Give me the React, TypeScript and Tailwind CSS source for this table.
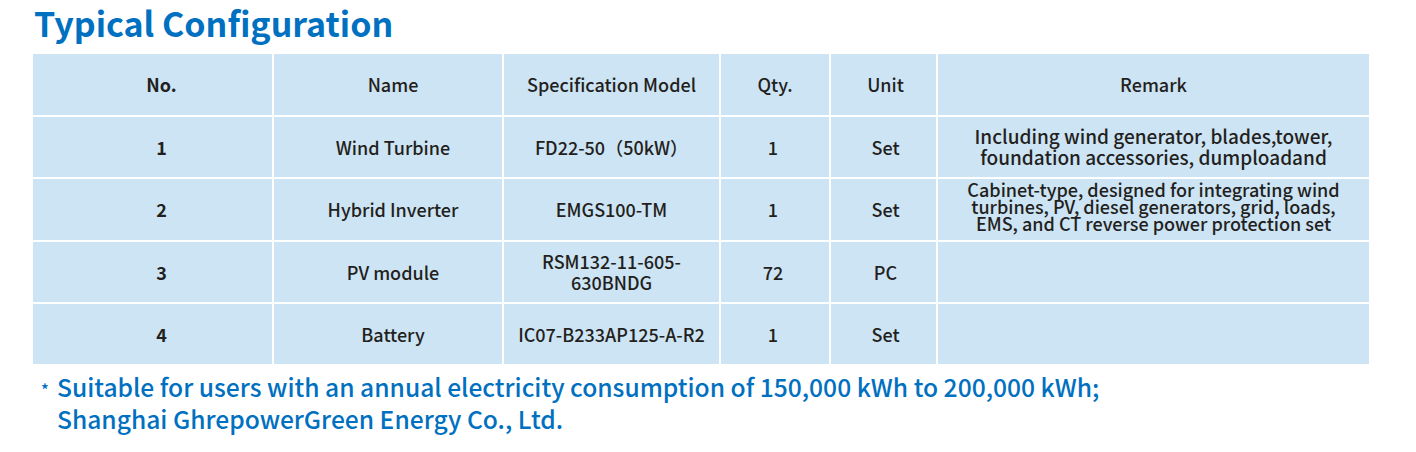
const COLS = ['No.', 'Name', 'Specification Model', 'Qty.', 'Unit', 'Remark']

const ROWS: { no: string; name: string; spec: string[]; qty: string; unit: string; remark: string[]; tight?: boolean }[] = [
  {
    no: '1',
    name: 'Wind Turbine',
    spec: ['FD22-50（50kW）'],
    qty: '1',
    unit: 'Set',
    remark: ['Including wind generator, blades,tower,', 'foundation accessories, dumploadand'],
  },
  {
    no: '2',
    name: 'Hybrid Inverter',
    spec: ['EMGS100-TM'],
    qty: '1',
    unit: 'Set',
    remark: [
      'Cabinet-type, designed for integrating wind',
      'turbines, PV, diesel generators, grid, loads,',
      'EMS, and CT reverse power protection set',
    ],
    tight: true,
  },
  { no: '3', name: 'PV module', spec: ['RSM132-11-605-', '630BNDG'], qty: '72', unit: 'PC', remark: [] },
  { no: '4', name: 'Battery', spec: ['IC07-B233AP125-A-R2'], qty: '1', unit: 'Set', remark: [] },
]

const cell = 'bg-[#cde4f4] flex flex-col items-center justify-center text-center text-[18px] text-[#231f20]'

export default function App() {
  return (
    <div
      className="w-[1416px] h-[452px] bg-white overflow-hidden"
      style={{ fontFamily: '"Noto Sans CJK SC", "Noto Sans", sans-serif' }}
    >
      <h1 className="pl-[34px] h-[54px] text-[34px] leading-[46px] font-bold text-[#0070c0]">
        Typical Configuration
      </h1>

      <div className="ml-[33px] w-[1336px] grid grid-cols-[239px_228px_215px_108px_105px_431px] grid-rows-[61px_60px_61px_60px_60px] gap-[2px]">
        {COLS.map((c, i) => (
          <div
            key={c}
            className={`${cell} ${i === 0 ? 'font-bold pl-[18px]' : 'font-medium'} ${i === 1 ? 'pl-[10px]' : ''} ${i === 4 ? 'pl-[4px]' : ''}`}
          >
            {c}
          </div>
        ))}
        {ROWS.map((r) => (
          <div key={r.no} className="contents">
            <div className={`${cell} font-bold pl-[18px]`}>{r.no}</div>
            <div className={`${cell} font-medium pl-[10px]`}>{r.name}</div>
            <div className={`${cell} font-medium leading-[21px]`}>
              {r.spec.map((s) => (
                <span key={s}>{s}</span>
              ))}
            </div>
            <div className={`${cell} font-medium pr-[4px]`}>{r.qty}</div>
            <div className={`${cell} font-medium pl-[4px]`}>{r.unit}</div>
            <div
              className={`${cell} font-medium ${
                r.tight ? 'leading-[17px] justify-start pt-[2px]' : 'leading-[21px] text-[19px] pb-[2px]'
              }`}
            >
              {r.remark.map((s) => (
                <span key={s}>{s}</span>
              ))}
            </div>
          </div>
        ))}
      </div>

      <div className="mt-[6px] pl-[41px] flex text-[24.6px] leading-[32px] font-medium text-[#0070c0]">
        <span className="w-[16px] text-[16px] leading-[38px]">*</span>
        <div className="flex flex-col">
          <span>Suitable for users with an annual electricity consumption of 150,000 kWh to 200,000 kWh;</span>
          <span>Shanghai GhrepowerGreen Energy Co., Ltd.</span>
        </div>
      </div>
    </div>
  )
}
